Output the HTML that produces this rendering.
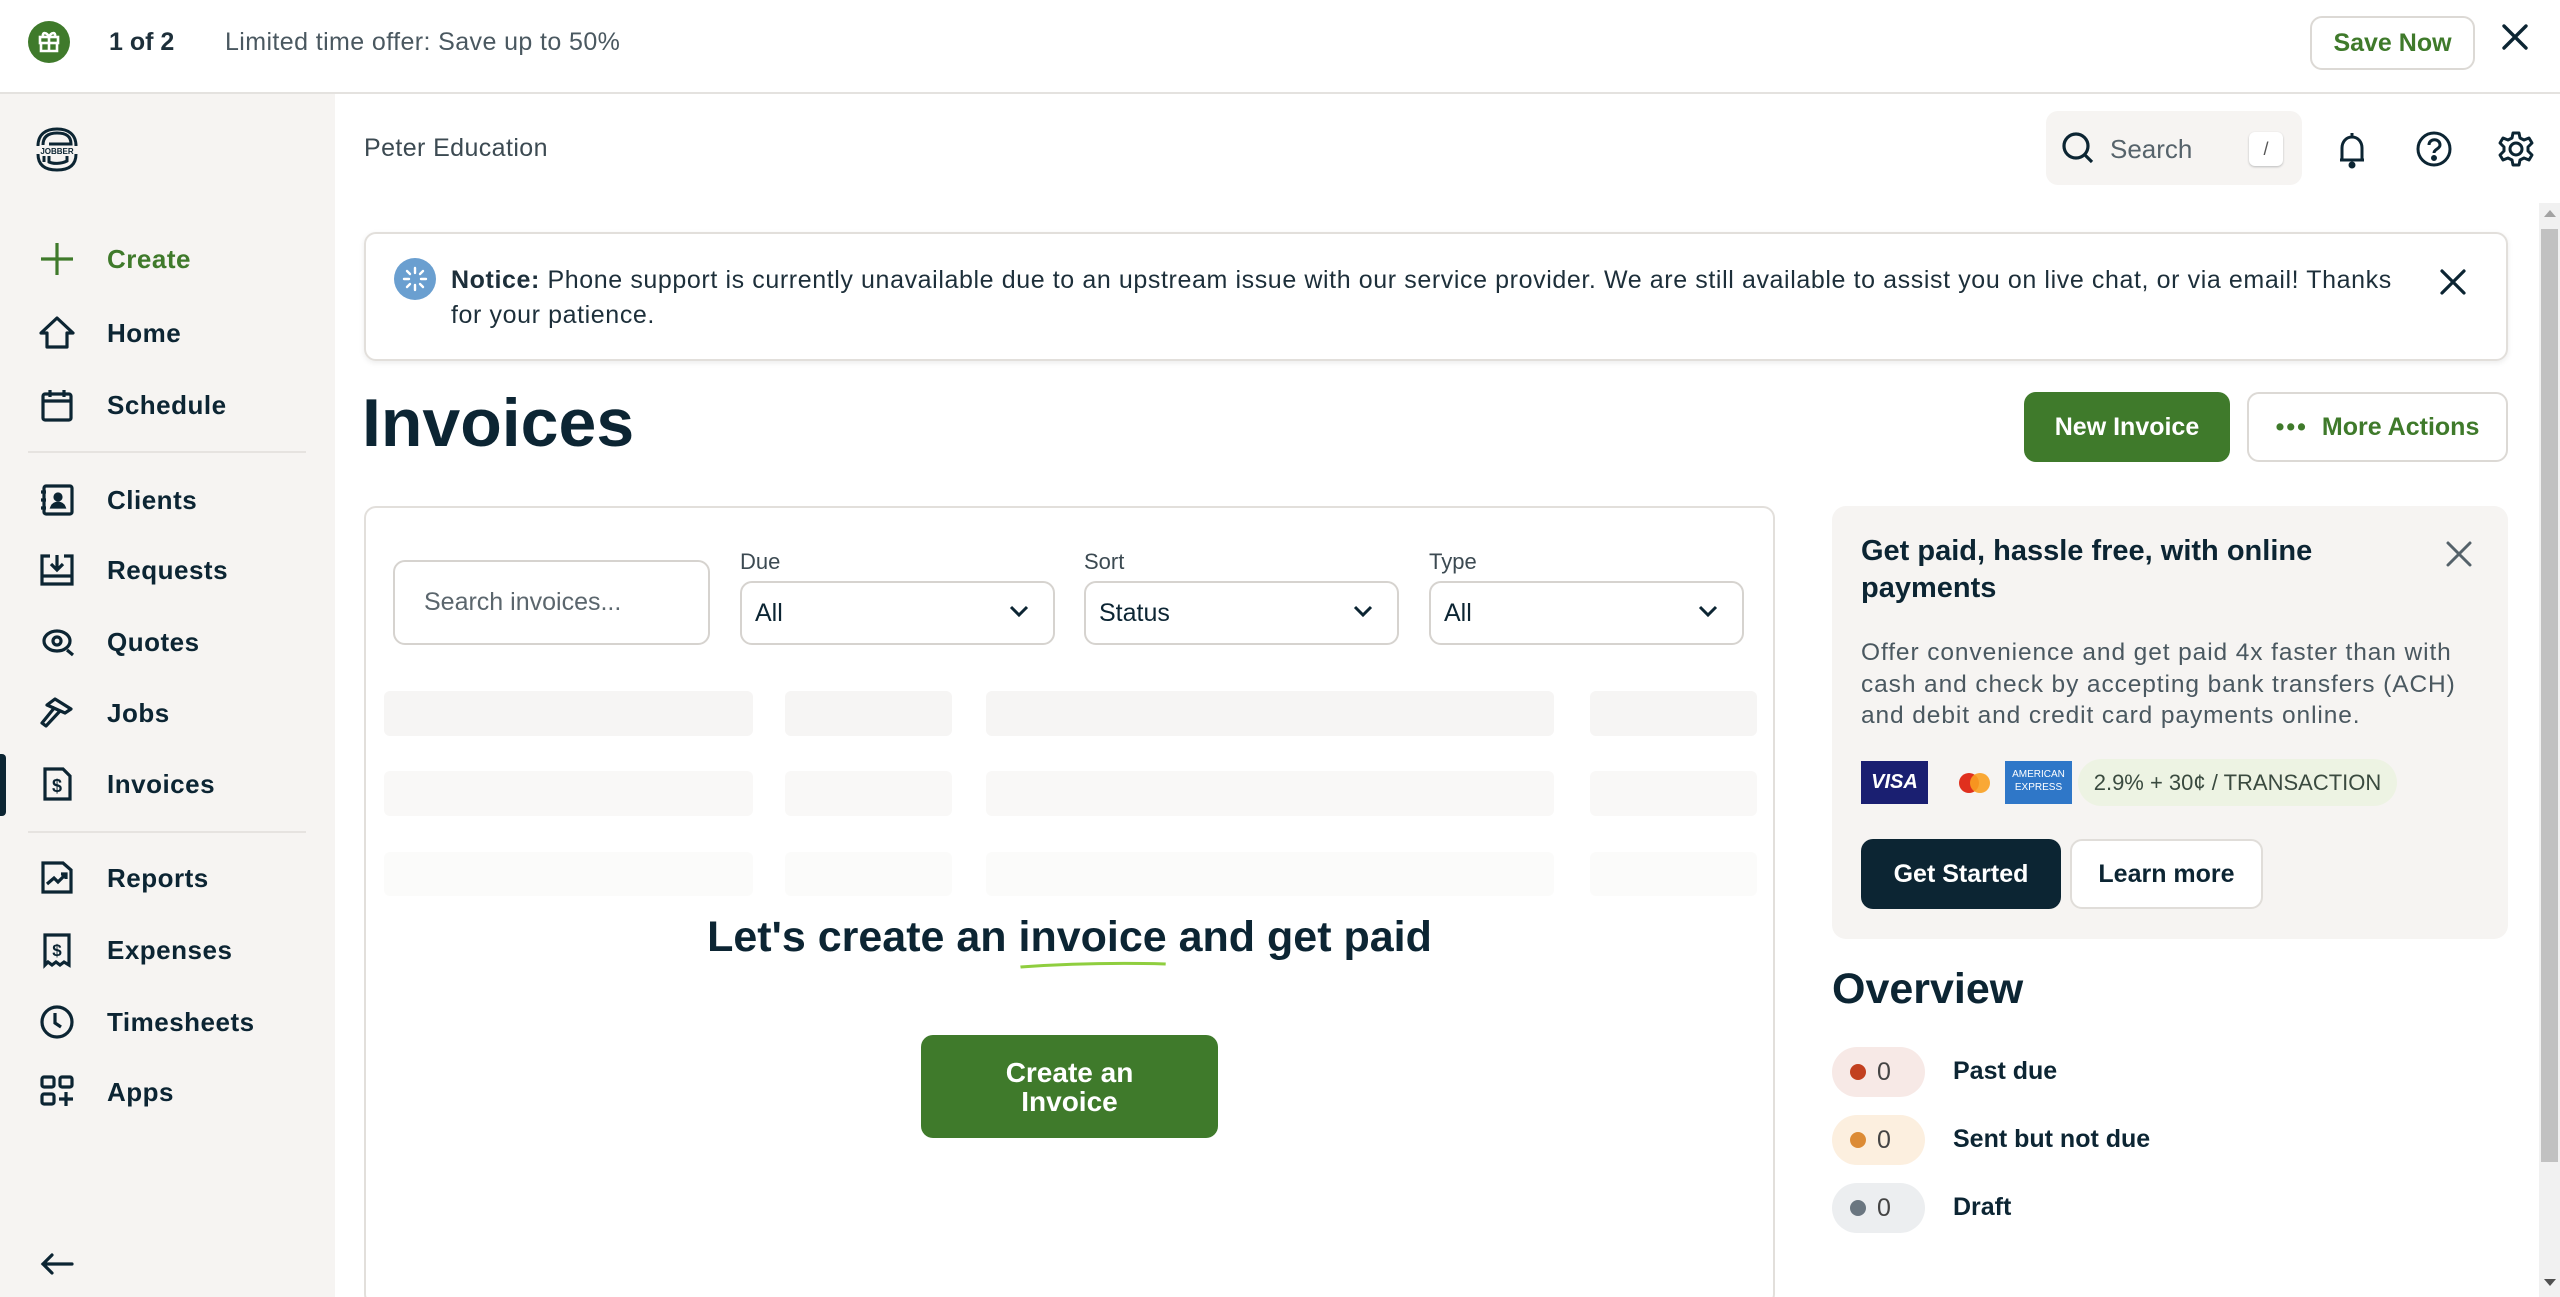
<!DOCTYPE html>
<html><head><meta charset="utf-8"><style>
*{box-sizing:border-box;margin:0;padding:0}
html,body{width:2560px;height:1297px;overflow:hidden}
body{background:#fff;font-family:"Liberation Sans",sans-serif;color:#0c2533;position:relative}
.abs{position:absolute}
.top{left:0;top:0;width:2560px;height:94px;border-bottom:2px solid #e4e2df;background:#fff}
.side{left:0;top:94px;width:335px;height:1203px;background:#f6f4f2}
.nav{position:absolute;left:0;width:335px;height:60px;display:flex;align-items:center}
.nav svg{position:absolute;left:37px;width:40px;height:40px}
.nav span{position:absolute;left:107px;font-size:26px;font-weight:bold;color:#0c2533;letter-spacing:.5px}
.sel{border:2px solid #d6d3cf;border-radius:12px;background:#fff}
.lbl{font-size:22px;color:#3c4a52}
.sk{position:absolute;background:#f6f5f4;border-radius:6px}
.btn{position:absolute;border-radius:12px;display:flex;align-items:center;justify-content:center;font-weight:bold;font-size:25px}
</style></head><body>

<div class="abs top"></div>
<div class="abs" style="left:28px;top:21px;width:42px;height:42px;border-radius:50%;background:#3f7a2b">
<svg width="42" height="42" viewBox="0 0 42 42" fill="none" stroke="#fff" stroke-width="2.6"><rect x="12" y="16" width="18" height="6"/><path d="M13 22v8h16v-8M21 16v14M21 16c-2-5-7-5-6-1M21 16c2-5 7-5 6-1"/></svg></div>
<div class="abs" style="left:109px;top:28px;font-size:25px;font-weight:bold;color:#1d2f3a">1 of 2</div>
<div class="abs" style="left:225px;top:28px;font-size:25px;color:#4a5860;letter-spacing:.4px">Limited time offer: Save up to 50%</div>
<div class="btn" style="left:2310px;top:16px;width:165px;height:54px;border:2px solid #dcd9d5;color:#3f7a2b;font-size:25px">Save Now</div>
<svg class="abs" style="left:2500px;top:22px" width="30" height="30" viewBox="0 0 30 30" stroke="#0c2533" stroke-width="3.4" stroke-linecap="round"><path d="M4 4l22 22M26 4L4 26"/></svg>

<div class="abs side"></div>
<svg class="abs" style="left:32px;top:124px" width="50" height="50" viewBox="0 0 50 50" fill="none" stroke="#0c2533" stroke-width="3"><path d="M6 22c0-12 8-17 19-17s19 5 19 17M11 21c0-9 6-12 14-12 9 0 14 3 14 11H17M6 30c0 12 8 16 19 16s19-4 19-16M12 32v6M17 32v6c4 2 12 2 18-1v-5"/><text x="25" y="30" font-size="8" font-weight="bold" fill="#0c2533" stroke="none" text-anchor="middle" font-family="Liberation Sans">JOBBER</text></svg>

<div class="nav" style="top:229px"><svg viewBox="0 0 40 40" stroke="#3f7a2b" stroke-width="3.2" fill="none"><path d="M20 4v32M4 20h32"/></svg><span style="color:#3f7a2b">Create</span></div>
<div class="nav" style="top:303px"><svg viewBox="0 0 40 40" stroke="#0c2533" stroke-width="3.2" fill="none" stroke-linejoin="round"><path d="M4 20L20 5l16 15h-6v14H10V20z"/></svg><span>Home</span></div>
<div class="nav" style="top:375px"><svg viewBox="0 0 40 40" stroke="#0c2533" stroke-width="3.2" fill="none"><rect x="6" y="9" width="28" height="26" rx="2"/><path d="M6 16h28M13 5v7M27 5v7"/></svg><span>Schedule</span></div>
<div class="abs" style="left:28px;top:451px;width:278px;height:2px;background:#e6e3e0"></div>
<div class="nav" style="top:470px"><svg viewBox="0 0 40 40" stroke="#0c2533" stroke-width="3.2" fill="none"><rect x="7" y="6" width="28" height="28" rx="2"/><path d="M4 12h5M4 20h5M4 28h5"/><circle cx="21" cy="17" r="3" fill="#0c2533"/><path d="M15 27c2-5 10-5 12 0z" fill="#0c2533"/></svg><span>Clients</span></div>
<div class="nav" style="top:540px"><svg viewBox="0 0 40 40" stroke="#0c2533" stroke-width="3.2" fill="none"><path d="M13 6H5v28h30V6h-8M5 26h30M20 5v14M14 14l6 6 6-6"/></svg><span>Requests</span></div>
<div class="nav" style="top:612px"><svg viewBox="0 0 40 40" stroke="#0c2533" stroke-width="3.2" fill="none"><ellipse cx="20" cy="19" rx="13" ry="10"/><circle cx="20" cy="19" r="4"/><path d="M30 28l6 5"/></svg><span>Quotes</span></div>
<div class="nav" style="top:683px"><svg viewBox="0 0 40 40" stroke="#0c2533" stroke-width="3.2" fill="none" stroke-linejoin="round"><path d="M10 12l8-6 16 10-6 4zM18 14L5 30l4 3 14-15"/></svg><span>Jobs</span></div>
<div class="abs" style="left:0;top:754px;width:6px;height:62px;background:#0c2533;border-radius:0 4px 4px 0"></div>
<div class="nav" style="top:754px"><svg viewBox="0 0 40 40" stroke="#0c2533" stroke-width="3.2" fill="none"><path d="M8 5h18l7 7v23H8z"/><text x="20" y="28" font-size="18" font-weight="bold" fill="#0c2533" stroke="none" text-anchor="middle" font-family="Liberation Sans">$</text></svg><span>Invoices</span></div>
<div class="abs" style="left:28px;top:831px;width:278px;height:2px;background:#e6e3e0"></div>
<div class="nav" style="top:848px"><svg viewBox="0 0 40 40" stroke="#0c2533" stroke-width="3.2" fill="none"><path d="M6 5h20l8 7v22H6z"/><path d="M10 26l7-6 4 4 8-8M24 16h5v5"/></svg><span>Reports</span></div>
<div class="nav" style="top:920px"><svg viewBox="0 0 40 40" stroke="#0c2533" stroke-width="3.2" fill="none"><path d="M8 5h24v30l-5-3-4 3-4-3-4 3-4-3-3 3z"/><text x="20" y="26" font-size="17" font-weight="bold" fill="#0c2533" stroke="none" text-anchor="middle" font-family="Liberation Sans">$</text></svg><span>Expenses</span></div>
<div class="nav" style="top:992px"><svg viewBox="0 0 40 40" stroke="#0c2533" stroke-width="3.2" fill="none"><circle cx="20" cy="20" r="15"/><path d="M18 11v10l6 4"/></svg><span>Timesheets</span></div>
<div class="nav" style="top:1062px"><svg viewBox="0 0 40 40" stroke="#0c2533" stroke-width="3.2" fill="none"><rect x="5" y="5" width="12" height="10" rx="2"/><rect x="23" y="5" width="12" height="10" rx="2"/><rect x="5" y="22" width="12" height="10" rx="2"/><path d="M29 20v14M22 27h14"/></svg><span>Apps</span></div>
<svg class="abs" style="left:40px;top:1252px" width="34" height="24" viewBox="0 0 34 24" stroke="#0c2533" stroke-width="3.2" fill="none" stroke-linecap="round"><path d="M32 12H3M12 3l-9 9 9 9"/></svg>

<div class="abs" style="left:364px;top:134px;font-size:25px;color:#3c4a52;letter-spacing:.4px">Peter Education</div>
<div class="abs" style="left:2046px;top:111px;width:256px;height:74px;background:#f6f4f2;border-radius:12px"></div>
<svg class="abs" style="left:2060px;top:130px" width="36" height="36" viewBox="0 0 36 36" stroke="#0c2533" stroke-width="3.2" fill="none"><circle cx="16" cy="16" r="12"/><path d="M25 25l7 7"/></svg>
<div class="abs" style="left:2110px;top:134px;font-size:26px;color:#56636b">Search</div>
<div class="abs" style="left:2249px;top:132px;width:34px;height:34px;background:#fff;border-radius:6px;box-shadow:0 1px 2px #bbb;font-size:18px;color:#555;text-align:center;line-height:34px">/</div>
<svg class="abs" style="left:2334px;top:130px" width="36" height="40" viewBox="0 0 36 40" stroke="#0c2533" stroke-width="3" fill="none"><path d="M18 3v3M8 30V18c0-6 4-11 10-11s10 5 10 11v12H6h24"/><circle cx="18" cy="35" r="2" fill="#0c2533"/></svg>
<svg class="abs" style="left:2415px;top:130px" width="38" height="38" viewBox="0 0 38 38" stroke="#0c2533" stroke-width="3" fill="none"><circle cx="19" cy="19" r="16"/><path d="M14 15c0-7 11-7 11 0 0 4-6 4-6 8"/><circle cx="19" cy="28" r="1.5" fill="#0c2533"/></svg>
<svg class="abs" style="left:2497px;top:130px" width="38" height="38" viewBox="0 0 38 38" stroke="#0c2533" stroke-width="3" fill="none"><path d="M16 3h6l1 5 4 2 5-2 3 5-4 4v4l4 4-3 5-5-2-4 2-1 5h-6l-1-5-4-2-5 2-3-5 4-4v-4l-4-4 3-5 5 2 4-2z" stroke-linejoin="round"/><circle cx="19" cy="19" r="6"/></svg>

<div class="abs" style="left:364px;top:232px;width:2144px;height:129px;border:2px solid #e2dfdb;border-radius:12px;box-shadow:0 2px 6px rgba(0,0,0,.08)"></div>
<svg class="abs" style="left:394px;top:258px" width="42" height="42" viewBox="0 0 42 42"><circle cx="21" cy="21" r="21" fill="#6a9fd0"/><g stroke="#fff" stroke-width="2.4" stroke-linecap="round"><path d="M21 10v5M21 27v5M10 21h5M27 21h5M13 13l3 3M26 26l3 3M29 13l-3 3M16 26l-3 3"/></g></svg>
<div class="abs" style="left:451px;top:263px;width:1965px;font-size:25px;line-height:35px;color:#1d2f3a;letter-spacing:.6px"><b>Notice:</b> Phone support is currently unavailable due to an upstream issue with our service provider. We are still available to assist you on live chat, or via email! Thanks for your patience.</div>
<svg class="abs" style="left:2439px;top:268px" width="28" height="28" viewBox="0 0 28 28" stroke="#0c2533" stroke-width="3.2" stroke-linecap="round"><path d="M3 3l22 22M25 3L3 25"/></svg>

<div class="abs" style="left:362px;top:384px;font-size:68px;font-weight:bold;color:#0c2533">Invoices</div>
<div class="btn" style="left:2024px;top:392px;width:206px;height:70px;background:#3f7a2b;color:#fff">New Invoice</div>
<div class="btn" style="left:2247px;top:392px;width:261px;height:70px;border:2px solid #dcd9d5;color:#3f7a2b"><span style="letter-spacing:2px;margin-right:14px">•••</span>More Actions</div>

<div class="abs" style="left:364px;top:506px;width:1411px;height:800px;border:2px solid #e2dfdb;border-radius:12px"></div>
<div class="abs sel" style="left:393px;top:560px;width:317px;height:85px"></div>
<div class="abs" style="left:424px;top:588px;font-size:25px;color:#5b666d">Search invoices...</div>
<div class="abs lbl" style="left:740px;top:549px">Due</div>
<div class="abs lbl" style="left:1084px;top:549px">Sort</div>
<div class="abs lbl" style="left:1429px;top:549px">Type</div>
<div class="abs sel" style="left:740px;top:581px;width:315px;height:64px"></div>
<div class="abs sel" style="left:1084px;top:581px;width:315px;height:64px"></div>
<div class="abs sel" style="left:1429px;top:581px;width:315px;height:64px"></div>
<div class="abs" style="left:755px;top:599px;font-size:25px">All</div>
<div class="abs" style="left:1099px;top:599px;font-size:25px">Status</div>
<div class="abs" style="left:1444px;top:599px;font-size:25px">All</div>
<svg class="abs" style="left:1008px;top:603px" width="22" height="16" viewBox="0 0 22 16" stroke="#0c2533" stroke-width="3" fill="none"><path d="M3 4l8 8 8-8"/></svg>
<svg class="abs" style="left:1352px;top:603px" width="22" height="16" viewBox="0 0 22 16" stroke="#0c2533" stroke-width="3" fill="none"><path d="M3 4l8 8 8-8"/></svg>
<svg class="abs" style="left:1697px;top:603px" width="22" height="16" viewBox="0 0 22 16" stroke="#0c2533" stroke-width="3" fill="none"><path d="M3 4l8 8 8-8"/></svg>

<div class="sk" style="left:384px;top:691px;width:369px;height:45px"></div><div class="sk" style="left:785px;top:691px;width:167px;height:45px"></div><div class="sk" style="left:986px;top:691px;width:568px;height:45px"></div><div class="sk" style="left:1590px;top:691px;width:167px;height:45px"></div>
<div class="sk" style="left:384px;top:771px;width:369px;height:45px;background:#f9f8f7"></div><div class="sk" style="left:785px;top:771px;width:167px;height:45px;background:#f9f8f7"></div><div class="sk" style="left:986px;top:771px;width:568px;height:45px;background:#f9f8f7"></div><div class="sk" style="left:1590px;top:771px;width:167px;height:45px;background:#f9f8f7"></div>
<div class="sk" style="left:384px;top:852px;width:369px;height:44px;background:#fbfbfa"></div><div class="sk" style="left:785px;top:852px;width:167px;height:44px;background:#fbfbfa"></div><div class="sk" style="left:986px;top:852px;width:568px;height:44px;background:#fbfbfa"></div><div class="sk" style="left:1590px;top:852px;width:167px;height:44px;background:#fbfbfa"></div>

<div class="abs" style="left:364px;top:913px;width:1411px;text-align:center;font-size:43px;font-weight:bold;color:#0c2533">Let's create an <span style="position:relative">invoice<svg style="position:absolute;left:0;bottom:-8px" width="100%" height="8" viewBox="0 0 100 8" preserveAspectRatio="none"><path d="M1 6Q50 1 99 3" stroke="#8fce3f" stroke-width="3" fill="none"/></svg></span> and get paid</div>
<div class="btn" style="left:921px;top:1035px;width:297px;height:103px;background:#3f7a2b;color:#fff;font-size:28px;line-height:29px;text-align:center">Create an<br>Invoice</div>

<div class="abs" style="left:1832px;top:506px;width:676px;height:433px;background:#f6f4f2;border-radius:14px"></div>
<div class="abs" style="left:1861px;top:533px;width:520px;font-size:29px;line-height:37px;font-weight:bold;color:#0c2533">Get paid, hassle free, with online payments</div>
<svg class="abs" style="left:2445px;top:540px" width="28" height="28" viewBox="0 0 28 28" stroke="#55626a" stroke-width="3" stroke-linecap="round"><path d="M3 3l22 22M25 3L3 25"/></svg>
<div class="abs" style="left:1861px;top:637px;width:620px;font-size:24.5px;line-height:31.5px;color:#4a5860;letter-spacing:.9px">Offer convenience and get paid 4x faster than with cash and check by accepting bank transfers (ACH) and debit and credit card payments online.</div>
<div class="abs" style="left:1861px;top:761px;width:67px;height:43px;background:#1a1f71;color:#fff;font-style:italic;font-weight:bold;font-size:20px;text-align:center;line-height:43px">VISA</div>
<svg class="abs" style="left:1952px;top:768px" width="44" height="30" viewBox="0 0 44 30"><circle cx="17" cy="15" r="10" fill="#e0301e"/><circle cx="28" cy="15" r="10" fill="#f9a020" opacity=".9"/></svg>
<div class="abs" style="left:2005px;top:761px;width:67px;height:43px;background:#2f77c8;color:#fff;font-size:10px;line-height:13px;text-align:center;padding-top:7px">AMERICAN<br>EXPRESS</div>
<div class="abs" style="left:2078px;top:759px;width:319px;height:47px;background:#edf3e3;border-radius:24px;font-size:22px;line-height:47px;text-align:center;color:#3a4a3f">2.9% + 30¢ / TRANSACTION</div>
<div class="btn" style="left:1861px;top:839px;width:200px;height:70px;background:#0c2533;color:#fff">Get Started</div>
<div class="btn" style="left:2070px;top:839px;width:193px;height:70px;background:#fff;border:2px solid #e0ddd9;color:#0c2533">Learn more</div>

<div class="abs" style="left:1832px;top:965px;font-size:43px;font-weight:bold;color:#0c2533">Overview</div>
<div class="abs" style="left:1832px;top:1047px;width:93px;height:50px;border-radius:25px;background:#f7e9e6"></div>
<div class="abs" style="left:1850px;top:1064px;width:16px;height:16px;border-radius:50%;background:#c2401f"></div>
<div class="abs" style="left:1877px;top:1058px;font-size:25px;color:#444">0</div>
<div class="abs" style="left:1953px;top:1057px;font-size:25px;font-weight:bold">Past due</div>
<div class="abs" style="left:1832px;top:1115px;width:93px;height:50px;border-radius:25px;background:#fcefdf"></div>
<div class="abs" style="left:1850px;top:1132px;width:16px;height:16px;border-radius:50%;background:#dc8b35"></div>
<div class="abs" style="left:1877px;top:1126px;font-size:25px;color:#444">0</div>
<div class="abs" style="left:1953px;top:1125px;font-size:25px;font-weight:bold">Sent but not due</div>
<div class="abs" style="left:1832px;top:1183px;width:93px;height:50px;border-radius:25px;background:#eceef0"></div>
<div class="abs" style="left:1850px;top:1200px;width:16px;height:16px;border-radius:50%;background:#6a7680"></div>
<div class="abs" style="left:1877px;top:1194px;font-size:25px;color:#444">0</div>
<div class="abs" style="left:1953px;top:1193px;font-size:25px;font-weight:bold">Draft</div>

<div class="abs" style="left:2539px;top:203px;width:21px;height:1094px;background:#f1f1f1"></div>
<div class="abs" style="left:2541px;top:229px;width:17px;height:933px;background:#c1c1c1"></div>
<svg class="abs" style="left:2542px;top:208px" width="16" height="10" viewBox="0 0 16 10"><path d="M2 9l6-7 6 7z" fill="#a3a3a3"/></svg>
<svg class="abs" style="left:2542px;top:1278px" width="16" height="10" viewBox="0 0 16 10"><path d="M2 1l6 7 6-7z" fill="#505050"/></svg>
</body></html>
